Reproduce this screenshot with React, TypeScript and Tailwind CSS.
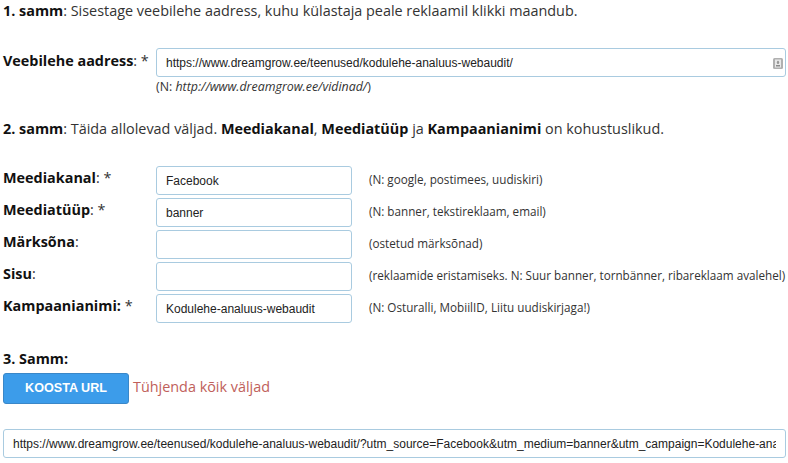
const fields = [
  { label: 'Meediakanal', star: true, value: 'Facebook', hint: '(N: google, postimees, uudiskiri)' },
  { label: 'Meediatüüp', star: true, value: 'banner', hint: '(N: banner, tekstireklaam, email)' },
  { label: 'Märksõna', star: false, value: '', hint: '(ostetud märksõnad)' },
  { label: 'Sisu', star: false, value: '', hint: '(reklaamide eristamiseks. N: Suur banner, tornbänner, ribareklaam avalehel)' },
];

const inputClass =
  "h-[29px] rounded-[3px] border border-[#a9cbe0] bg-white pl-[9px] font-['Liberation_Sans',sans-serif] text-[12px] text-[#222] outline-none";

export default function App() {
  return (
    <div className="h-[463px] w-[788px] overflow-hidden bg-white font-['Open_Sans',sans-serif] text-[14.4px] leading-[20px] text-[#333]">
      <p className="pl-[3px] pt-px">
        <b className="text-[#111]">1. samm</b>: Sisestage veebilehe aadress, kuhu külastaja peale reklaamil klikki maandub.
      </p>

      <div className="mt-[27px] flex pl-[3px]">
        <div className="w-[153px] pt-[3px]">
          <b className="text-[#111]">Veebilehe aadress</b>: *
        </div>
        <div className="relative w-[630px]">
          <input readOnly value="https://www.dreamgrow.ee/teenused/kodulehe-analuus-webaudit/" className={`${inputClass} w-full`} />
          <svg className="absolute right-[3px] top-[10px]" width="10" height="11" viewBox="0 0 10 11">
            <rect x="0" y="0" width="10" height="11" rx="1.5" fill="#b0b0b0" />
            <rect x="2" y="1.5" width="6" height="8" fill="#e8e8e8" />
            <path d="M5 2.5L6.5 4.5H5.7V6H4.3V4.5H3.5Z" fill="#8a8a8a" />
            <rect x="3" y="7" width="4" height="1.5" fill="#8a8a8a" />
          </svg>
        </div>
      </div>
      <p className="pl-[156px] pt-[1px] text-[12.4px] leading-[18px]">
        (N: <i>http://www.dreamgrow.ee/vidinad/</i>)
      </p>

      <p className="mt-[23px] pl-[3px]">
        <b className="text-[#111]">2. samm</b>: Täida allolevad väljad. <b className="text-[#111]">Meediakanal</b>,{' '}
        <b className="text-[#111]">Meediatüüp</b> ja <b className="text-[#111]">Kampaanianimi</b> on kohustuslikud.
      </p>

      <div className="mt-[27px] flex flex-col gap-[3px] pl-[3px]">
        {fields.map((f) => (
          <div key={f.label} className="flex h-[29px]">
            <div className="w-[153px] pt-[2px]">
              <b className="text-[#111]">{f.label}</b>: {f.star && '*'}
            </div>
            <input readOnly value={f.value} className={`${inputClass} w-[196px]`} />
            <span className="ml-[17px] whitespace-nowrap text-[11.7px] leading-[27px]">{f.hint}</span>
          </div>
        ))}
        <div className="flex h-[29px]">
          <div className="w-[153px] pt-[2px]">
            <b className="text-[#111]">Kampaanianimi:</b> *
          </div>
          <input readOnly value="Kodulehe-analuus-webaudit" className={`${inputClass} w-[196px]`} />
          <span className="ml-[17px] whitespace-nowrap text-[11.7px] leading-[27px]">(N: Osturalli, MobiilID, Liitu uudiskirjaga!)</span>
        </div>
      </div>

      <p className="mt-[26px] pl-[3px]">
        <b className="text-[#111]">3. Samm:</b>
      </p>
      <div className="mt-[4px] flex items-center pl-[3px]">
        <button className="h-[31px] w-[126px] rounded-[3px] border border-[#3a87c8] bg-[#3c9cea] pb-[2px] font-['Liberation_Sans',sans-serif] text-[12.6px] font-bold text-white">
          KOOSTA URL
        </button>
        <a className="mb-[4px] ml-[4px] text-[#c0605a]">Tühjenda kõik väljad</a>
      </div>

      <input
        readOnly
        value="https://www.dreamgrow.ee/teenused/kodulehe-analuus-webaudit/?utm_source=Facebook&utm_medium=banner&utm_campaign=Kodulehe-analuus-webaudit"
        className={`${inputClass} mt-[25px] ml-[3px] w-[783px] pr-[9px]`}
      />
    </div>
  );
}
